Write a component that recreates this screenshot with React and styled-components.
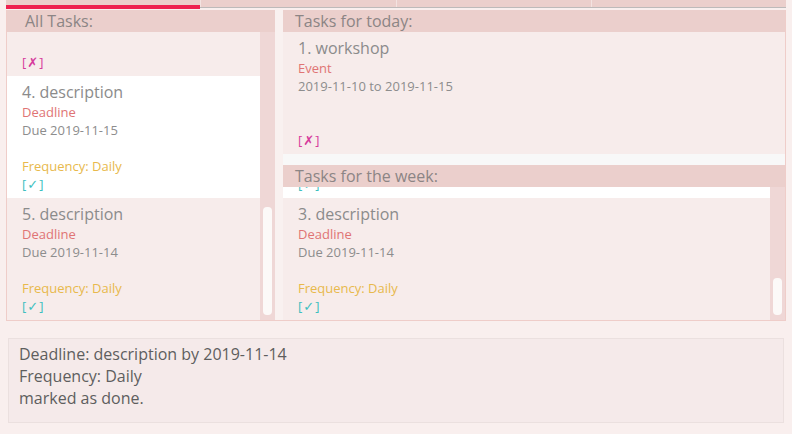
import React from "react";
import styled, { createGlobalStyle } from "styled-components";

const GlobalStyle = createGlobalStyle`
  body {
    margin: 0;
    background: #f9efee;
    font-family: "Open Sans", "Noto Sans", "DejaVu Sans", sans-serif;
  }
`;

const allTasks = [
  { id: 2, title: "workshop", type: "Event", when: "2019-11-10 to 2019-11-15", freq: "", done: false },
  { id: 4, title: "description", type: "Deadline", when: "Due 2019-11-15", freq: "Frequency: Daily", done: true, selected: true },
  { id: 5, title: "description", type: "Deadline", when: "Due 2019-11-14", freq: "Frequency: Daily", done: true },
];

const todayTasks = [
  { id: 1, title: "workshop", type: "Event", when: "2019-11-10 to 2019-11-15", freq: "", done: false },
];

const weekTasks = [
  { id: 2, title: "description", type: "Deadline", when: "Due 2019-11-15", freq: "Frequency: Daily", done: true, selected: true },
  { id: 3, title: "description", type: "Deadline", when: "Due 2019-11-14", freq: "Frequency: Daily", done: true },
];

function TaskCard({ task }) {
  return (
    <Card $selected={task.selected}>
      <Title>{task.id}. {task.title}</Title>
      <Type>{task.type}</Type>
      <Line>{task.when}</Line>
      <Line>{"\u00a0"}</Line>
      <Freq>{task.freq || "\u00a0"}</Freq>
      <Status $done={task.done}>
        [<Mark>{task.done ? "\u2713" : "\u2717"}</Mark>]
      </Status>
    </Card>
  );
}

function TaskList({ tasks, offset, thumbTop, thumbSize, empty }) {
  return (
    <ListArea $empty={empty}>
      <Viewport>
        <Scroller $offset={offset}>
          {tasks.map((t, i) => (
            <TaskCard key={i} task={t} />
          ))}
        </Scroller>
      </Viewport>
      {thumbSize ? (
        <Track>
          <Thumb $top={thumbTop} $size={thumbSize} />
        </Track>
      ) : null}
    </ListArea>
  );
}

export default function App() {
  return (
    <Page>
      <GlobalStyle />
      <TabBar>
        <Tab $active />
        <Tab />
        <Tab />
        <Tab />
      </TabBar>
      <Main>
        <LeftPane>
          <Header $inset={18}>All Tasks:</Header>
          <TaskList tasks={allTasks} offset={78} thumbTop={175} thumbSize={108} />
        </LeftPane>
        <Divider />
        <RightPane>
          <Section>
            <Header $inset={12}>Tasks for today:</Header>
            <TaskList tasks={todayTasks} offset={0} empty />
          </Section>
          <Section>
            <Header $inset={12}>Tasks for the week:</Header>
            <TaskList tasks={weekTasks} offset={111} thumbTop={91} thumbSize={37} />
          </Section>
        </RightPane>
      </Main>
      <ResultBox>
        <div>Deadline: description by 2019-11-14</div>
        <div>Frequency: Daily</div>
        <div>marked as done.</div>
      </ResultBox>
    </Page>
  );
}

const Page = styled.div`
  width: 792px;
  height: 434px;
  display: flex;
  flex-direction: column;
  overflow: hidden;
`;

const TabBar = styled.div`
  display: flex;
  height: 7px;
  margin: 0 6px 2px;
  background: #ebcfcc;
  border-bottom: 1px solid #bdbaba;
`;

const Tab = styled.div`
  position: relative;
  flex: 1;
  & + & {
    border-left: 1px solid #f3e3e1;
  }
  &::after {
    content: "";
    display: ${(p) => (p.$active ? "block" : "none")};
    position: absolute;
    left: 0;
    right: 0;
    bottom: -2px;
    height: 4px;
    background: #ee2150;
  }
`;

const Main = styled.div`
  display: flex;
  height: 310px;
  margin: 0 6px;
  border: 1px solid #efcdc9;
  border-top: none;
`;

const LeftPane = styled.div`
  width: 268px;
  display: flex;
  flex-direction: column;
`;

const Divider = styled.div`
  width: 8px;
  background: #f9f1f0;
`;

const RightPane = styled.div`
  flex: 1;
  display: flex;
  flex-direction: column;
`;

const Section = styled.div`
  flex: 1;
  display: flex;
  flex-direction: column;
  min-height: 0;
`;

const Header = styled.div`
  height: 22px;
  flex-shrink: 0;
  background: #ebcfcc;
  color: #8c8585;
  font-size: 16px;
  line-height: 22px;
  padding-left: ${(p) => p.$inset}px;
`;

const ListArea = styled.div`
  flex: 1;
  min-height: 0;
  display: flex;
  background: ${(p) => (p.$empty ? "#f8f8f8" : "#f7eceb")};
`;

const Viewport = styled.div`
  flex: 1;
  overflow: hidden;
`;

const Scroller = styled.div`
  margin-top: -${(p) => p.$offset}px;
`;

const Track = styled.div`
  width: 15px;
  flex-shrink: 0;
  background: #efd7d6;
  padding: 0 3px;
  box-sizing: border-box;
`;

const Thumb = styled.div`
  margin-top: ${(p) => p.$top}px;
  height: ${(p) => p.$size}px;
  background: #fcf9f8;
  border-radius: 4px;
`;

const Card = styled.div`
  height: 122px;
  box-sizing: border-box;
  padding: 6px 15px;
  background: ${(p) => (p.$selected ? "#ffffff" : "#f7eceb")};
  font-size: 13px;
  line-height: 18px;
  white-space: nowrap;
`;

const Title = styled.div`
  font-size: 16px;
  line-height: 21px;
  color: #8b8b8b;
`;

const Type = styled.div`
  color: #e07474;
`;

const Line = styled.div`
  color: #8d8d8d;
`;

const Freq = styled.div`
  color: #e8b94c;
`;

const Status = styled.div`
  color: ${(p) => (p.$done ? "#3ebfbf" : "#d63a9c")};
  font-size: 13px;
`;

const Mark = styled.span`
  font-family: "DejaVu Sans", sans-serif;
  font-size: 13px;
  padding: 0 1px;
`;

const ResultBox = styled.div`
  margin: 17px 8px 0;
  height: 85px;
  box-sizing: border-box;
  padding: 4px 10px;
  background: #f5eaea;
  border: 1px solid #ebe0df;
  color: #5e5e5e;
  font-size: 16px;
  line-height: 22px;
`;
